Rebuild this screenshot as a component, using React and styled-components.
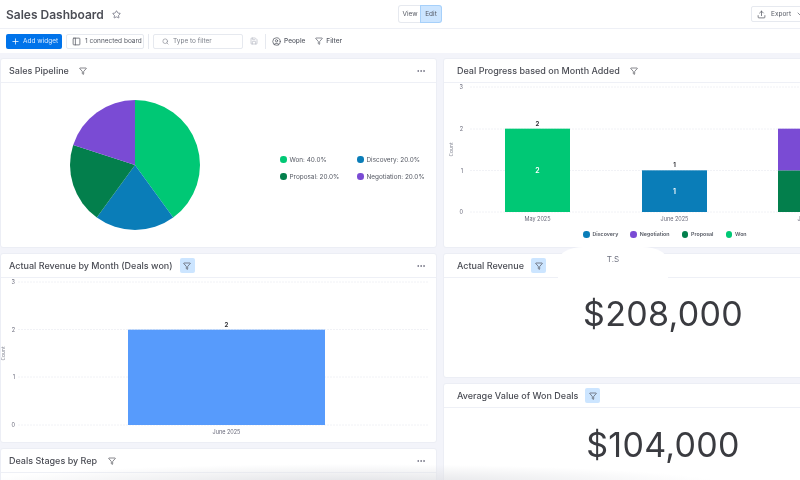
import React from 'react';
import styled, { createGlobalStyle } from 'styled-components';
import { Star, Plus, PanelLeft, Search, Save, CircleUser, Filter, MoreHorizontal, Upload, ChevronDown } from 'lucide-react';

const GlobalStyle = createGlobalStyle`
    html, body { margin: 0; padding: 0; background: #fff; }
    body { font-family: Inter, "Open Sans", "Liberation Sans", sans-serif; color: #323338; }
`

const Page = styled.div`
    position: relative;
    width: 800px;
    height: 480px;
    overflow: hidden;
    background: #fff;
    filter: blur(0.45px);
`

const Header = styled.div`
    height: 29px;
    display: flex;
    align-items: center;
    padding-left: 6px;
    position: relative;
    border-bottom: 1px solid #eef0f6;
    box-sizing: border-box;
`

const PageTitle = styled.div`
    font-size: 12px;
    font-weight: 600;
    color: #4b4d55;
    margin-right: 8px;
`

const ModeSwitch = styled.div`
    position: absolute;
    left: 399px;
    top: 6px;
    display: flex;
`

const ModeButton = styled.div`
    width: ${p => p.$active ? '20px' : '22px'};
    height: 16px;
    line-height: 16px;
    text-align: center;
    font-size: 6.5px;
    color: #555963;
    border-radius: ${p => p.$active ? '0 2px 2px 0' : '2px 0 0 2px'};
    background: ${p => p.$active ? '#cce5ff' : '#fff'};
    box-shadow: 0 0 0 1px ${p => p.$active ? '#a6d0fa' : '#e6e9ef'};
`

const ExportButton = styled.div`
    position: absolute;
    left: 751px;
    top: 6px;
    width: 60px;
    height: 16px;
    display: flex;
    align-items: center;
    gap: 5px;
    padding-left: 5px;
    box-sizing: border-box;
    font-size: 6.5px;
    color: #555963;
    border: 1px solid #e6e9ef;
    border-radius: 2px;
`

const Toolbar = styled.div`
    height: 24px;
    display: flex;
    align-items: center;
    padding-left: 6px;
    box-sizing: border-box;
`

const AddButton = styled.div`
    width: 56px;
    height: 15px;
    display: flex;
    align-items: center;
    gap: 3px;
    padding-left: 5px;
    box-sizing: border-box;
    background: #0073ea;
    color: #d8eaff;
    border-radius: 2px;
    font-size: 6.5px;
    margin-right: 4px;
`

const BoardButton = styled.div`
    width: 78px;
    height: 15px;
    display: flex;
    align-items: center;
    gap: 4px;
    padding-left: 5px;
    box-sizing: border-box;
    border: 1px solid #e6e9ef;
    border-radius: 2px;
    font-size: 6.5px;
    color: #555963;
`

const ToolbarDivider = styled.div`
    width: 1px;
    height: 15px;
    background: #e6e9ef;
    margin: 0 ${p => p.$right || 4}px 0 ${p => p.$left || 4}px;
`

const SearchBox = styled.div`
    width: 90px;
    height: 15px;
    display: flex;
    align-items: center;
    gap: 4px;
    padding-left: 8px;
    box-sizing: border-box;
    border: 1px solid #e6e9ef;
    border-radius: 2px;
    font-size: 6.5px;
    color: #7c808a;
    margin-right: 7px;
`

const ToolItem = styled.div`
    display: flex;
    align-items: center;
    gap: 3px;
    font-size: 6.5px;
    font-weight: 500;
    color: #555963;
    margin-right: 10px;
`

const Canvas = styled.div`
    height: 427px;
    padding-top: 5px;
    box-sizing: border-box;
    background: #f3f4fa;
    display: grid;
    grid-template-columns: 437px 380px;
    column-gap: 6px;
    overflow: hidden;
`

const Column = styled.div`
    display: flex;
    flex-direction: column;
    gap: 5px;
`

const Card = styled.div`
    flex: none;
    height: ${p => p.$height}px;
    background: #fff;
    border: 1px solid #eceef5;
    border-radius: 3px;
    box-sizing: border-box;
    display: flex;
    flex-direction: column;
`

const CardHead = styled.div`
    flex: none;
    height: 24px;
    display: flex;
    align-items: center;
    padding: 0 10px 0 ${p => p.$inset}px;
    border-bottom: 1px solid #eef0f6;
    box-sizing: border-box;
`

const CardTitle = styled.div`
    font-size: 9px;
    font-weight: 500;
    color: #4b4d55;
    margin-right: 7px;
    white-space: nowrap;
`

const FilterChip = styled.div`
    width: 15px;
    height: 15px;
    display: flex;
    align-items: center;
    justify-content: center;
    border-radius: 2px;
    background: ${p => p.$active ? '#cce5ff' : 'transparent'};
`

const MoreButton = styled.div`
    margin-left: auto;
    display: flex;
    color: #676879;
`

const CardBody = styled.div`
    flex: 1;
    min-height: 0;
    display: flex;
`

const PieArea = styled(CardBody)`
    align-items: center;
    padding-left: 69px;
    gap: 80px;
`

const PieLegend = styled.div`
    display: grid;
    grid-template-columns: 77px auto;
    row-gap: 9px;
    margin-top: 6px;
`

const LegendItem = styled.div`
    display: flex;
    align-items: center;
    gap: 3px;
    font-size: 6.4px;
    color: #555963;
    white-space: nowrap;
`

const Dot = styled.span`
    width: 6.5px;
    height: 6.5px;
    border-radius: 50%;
    background: ${p => p.$color};
`

const StackedBody = styled(CardBody)`
    flex-direction: column;
`

const BarLegend = styled.div`
    display: flex;
    gap: 12px;
    padding-left: 139px;
`

const BoldLegendItem = styled(LegendItem)`
    font-weight: 600;
    font-size: 5.3px;
`

const BigNumber = styled(CardBody)`
    align-items: center;
    justify-content: center;
    padding-left: 60px;
    padding-bottom: ${p => p.$lift}px;
    font-size: 34px;
    font-weight: 400;
    color: #3a3b40;
    letter-spacing: 0.3px;
`

const UserTab = styled.div`
    position: absolute;
    left: 558px;
    top: 247px;
    width: 110px;
    height: 40px;
    background: #fff;
    border-radius: 26px 26px 0 0 / 14px 14px 0 0;
    text-align: center;
    padding-top: 7px;
    box-sizing: border-box;
    font-size: 8px;
    color: #6f7280;
`

const BottomFade = styled.div`
    position: absolute;
    left: 0;
    right: 0;
    bottom: 0;
    height: 22px;
    background: radial-gradient(ellipse 370px 20px at 350px 26px, rgba(222,223,227,0.95), rgba(255,255,255,0));
    pointer-events: none;
`

const COLORS = { won: '#00c875', discovery: '#0a7db8', proposal: '#037f4c', negotiation: '#7a4bd4', blue: '#579bfc' };

const pieSlices = [
    { name: 'Won', pct: 40, color: COLORS.won },
    { name: 'Discovery', pct: 20, color: COLORS.discovery },
    { name: 'Proposal', pct: 20, color: COLORS.proposal },
    { name: 'Negotiation', pct: 20, color: COLORS.negotiation },
];

function PieChart() {
    const r = 65;
    let angle = -Math.PI / 2;
    const paths = pieSlices.map(s => {
        const next = angle + (s.pct / 100) * Math.PI * 2;
        const x1 = r + r * Math.cos(angle), y1 = r + r * Math.sin(angle);
        const x2 = r + r * Math.cos(next), y2 = r + r * Math.sin(next);
        const large = s.pct > 50 ? 1 : 0;
        angle = next;
        return <path key={s.name} fill={s.color} d={`M${r} ${r}L${x1} ${y1}A${r} ${r} 0 ${large} 1 ${x2} ${y2}Z`} />;
    });
    return <svg width="130" height="130" viewBox="0 0 130 130">{paths}</svg>;
}

// ticks are the y positions of 3,2,1,0, bars are stacks of segments with a value
function BarChart({ width, height, ticks, left, labelGap, lineEnd, countX, bars, barWidth }) {
    const base = ticks[3];
    const unit = (base - ticks[0]) / 3;
    const midY = (ticks[0] + base) / 2;
    return (
        <svg width={width} height={height} viewBox={`0 0 ${width} ${height}`} style={{ flex: 'none' }}>
            {ticks.map((y, i) => (
                <g key={y}>
                    <text x={left - labelGap} y={y + 2} fontSize="5.5" fill="#676879" textAnchor="end" fontFamily="Inter, sans-serif">{3 - i}</text>
                    <line x1={left} x2={lineEnd} y1={y} y2={y} stroke="#f1f2f6" strokeWidth="1" strokeDasharray="2 1" />
                </g>
            ))}
            <text transform={`translate(${countX} ${midY}) rotate(-90)`} fontSize="5" fill="#8a8d99" textAnchor="middle" fontFamily="Inter, sans-serif">Count</text>
            {bars.map(bar => {
                let y = base;
                const total = bar.segments.reduce((sum, s) => sum + s.value, 0);
                const cx = bar.x + barWidth / 2;
                return (
                    <g key={bar.label}>
                        {bar.segments.map(s => {
                            y -= s.value * unit;
                            return (
                                <g key={s.color}>
                                    <rect x={bar.x} y={y} width={barWidth} height={s.value * unit} fill={s.color} />
                                    {s.inner && <text x={cx} y={y + s.value * unit / 2 + 3} fontSize="7" fontWeight="600" fill="#fff" textAnchor="middle" fontFamily="Inter, sans-serif">{s.value}</text>}
                                </g>
                            );
                        })}
                        <text x={cx} y={y - 3} fontSize="6" fontWeight="700" fill="#323338" textAnchor="middle" fontFamily="Inter, sans-serif">{total}</text>
                        <text x={cx} y={base + 9} fontSize="5.5" fill="#676879" textAnchor="middle" fontFamily="Inter, sans-serif">{bar.label}</text>
                    </g>
                );
            })}
        </svg>
    );
}

const progressBars = [
    { label: 'May 2025', x: 61, segments: [{ value: 2, color: COLORS.won, inner: true }] },
    { label: 'June 2025', x: 198, segments: [{ value: 1, color: COLORS.discovery, inner: true }] },
    { label: 'July 2025', x: 334, segments: [{ value: 1, color: COLORS.proposal }, { value: 1, color: COLORS.negotiation }] },
];

const revenueBars = [
    { label: 'June 2025', x: 127, segments: [{ value: 2, color: COLORS.blue }] },
];

const barLegend = [
    { name: 'Discovery', color: COLORS.discovery },
    { name: 'Negotiation', color: COLORS.negotiation },
    { name: 'Proposal', color: COLORS.proposal },
    { name: 'Won', color: COLORS.won },
];

function WidgetHead({ title, active, more, inset = 8 }) {
    return (
        <CardHead $inset={inset}>
            <CardTitle>{title}</CardTitle>
            <FilterChip $active={active}><Filter size={8} color="#4b4d55" /></FilterChip>
            {more && <MoreButton><MoreHorizontal size={10} /></MoreButton>}
        </CardHead>
    );
}

export default function App() {
    return (
        <Page>
            <GlobalStyle />
            <Header>
                <PageTitle>Sales Dashboard</PageTitle>
                <Star size={9} color="#676879" />
                <ModeSwitch>
                    <ModeButton>View</ModeButton>
                    <ModeButton $active>Edit</ModeButton>
                </ModeSwitch>
                <ExportButton>
                    <Upload size={9} />
                    Export
                    <ChevronDown size={8} />
                </ExportButton>
            </Header>
            <Toolbar>
                <AddButton><Plus size={9} color="#fff" />Add widget</AddButton>
                <BoardButton><PanelLeft size={9} />1 connected board</BoardButton>
                <ToolbarDivider />
                <SearchBox><Search size={7} color="#7c808a" />Type to filter</SearchBox>
                <Save size={8} color="#b5b8c2" />
                <ToolbarDivider $left={7} $right={6} />
                <ToolItem><CircleUser size={9} />People</ToolItem>
                <ToolItem><Filter size={8} />Filter</ToolItem>
            </Toolbar>
            <Canvas>
                <Column>
                    <Card $height={190}>
                        <WidgetHead title="Sales Pipeline" more />
                        <PieArea>
                            <PieChart />
                            <PieLegend>
                                {pieSlices.map(s => (
                                    <LegendItem key={s.name}><Dot $color={s.color} />{s.name}: {s.pct}.0%</LegendItem>
                                ))}
                            </PieLegend>
                        </PieArea>
                    </Card>
                    <Card $height={190}>
                        <WidgetHead title="Actual Revenue by Month (Deals won)" active more />
                        <CardBody>
                            <BarChart width={435} height={164} ticks={[4, 51.5, 99, 147]} left={17} labelGap={3} lineEnd={428} countX={4} bars={revenueBars} barWidth={197} />
                        </CardBody>
                    </Card>
                    <Card $height={60}>
                        <WidgetHead title="Deals Stages by Rep" more />
                    </Card>
                </Column>
                <Column>
                    <Card $height={190}>
                        <WidgetHead title="Deal Progress based on Month Added" inset={13} />
                        <StackedBody>
                            <BarChart width={378} height={148} ticks={[4, 46, 87.5, 129]} left={26} labelGap={7} lineEnd={378} countX={9} bars={progressBars} barWidth={65} />
                            <BarLegend>
                                {barLegend.map(s => (
                                    <BoldLegendItem key={s.name}><Dot $color={s.color} />{s.name}</BoldLegendItem>
                                ))}
                            </BarLegend>
                        </StackedBody>
                    </Card>
                    <Card $height={125}>
                        <WidgetHead title="Actual Revenue" active inset={13} />
                        <BigNumber $lift={28}>$208,000</BigNumber>
                    </Card>
                    <Card $height={110}>
                        <WidgetHead title="Average Value of Won Deals" active inset={13} />
                        <BigNumber $lift={12}>$104,000</BigNumber>
                    </Card>
                </Column>
            </Canvas>
            <UserTab>T.S</UserTab>
            <BottomFade />
        </Page>
    );
}
